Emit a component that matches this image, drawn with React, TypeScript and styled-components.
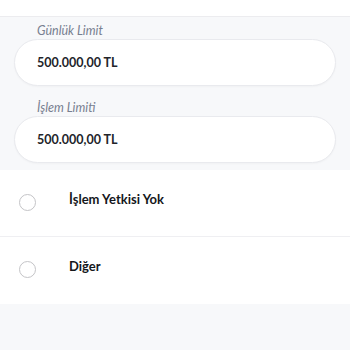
import React from 'react';
import styled, { createGlobalStyle } from 'styled-components';

const GlobalStyle = createGlobalStyle`
  html, body {
    margin: 0;
    padding: 0;
    background: #f7f8fa;
    font-family: Lato, "Noto Sans", sans-serif;
  }
`

const Page = styled.div`
  width: 350px;
  min-height: 350px;
  display: flex;
  flex-direction: column;
`

const TopBar = styled.div`
  height: 16px;
  background: #fff;
  border-bottom: 1px solid #ececef;
`

const LimitPanel = styled.div`
  background: #f7f8fa;
  padding: 6px 14px 7px;
  display: flex;
  flex-direction: column;
`

const Field = styled.div`
  display: flex;
  flex-direction: column;
  & + & {
    margin-top: 14px;
  }
`

const Label = styled.span`
  font-style: italic;
  font-size: 12.5px;
  line-height: 16px;
  color: #787f90;
  padding-left: 23px;
`

const Input = styled.div`
  height: 45px;
  border: 1px solid #e9eaee;
  border-radius: 24px;
  background: #fff;
  display: flex;
  align-items: center;
  padding-left: 22px;
  font-size: 12.5px;
  font-weight: 700;
  color: #22242a;
  box-shadow: 0 1px 2px rgba(0, 0, 0, 0.03);
`

const OptionList = styled.div`
  background: #fff;
`

const OptionRow = styled.div<{ $divider?: boolean }>`
  height: 67px;
  box-sizing: border-box;
  display: flex;
  align-items: flex-start;
  padding: 20px 0 0 19px;
  border-bottom: ${p => (p.$divider ? '1px solid #efeff2' : 'none')};
`

const Radio = styled.span`
  width: 17px;
  height: 17px;
  box-sizing: border-box;
  border: 1.6px solid #c4c4c7;
  border-radius: 50%;
  margin-top: 4px;
  flex-shrink: 0;
`

const OptionText = styled.span`
  margin-left: 33px;
  font-size: 13px;
  font-weight: 700;
  line-height: 18px;
  color: #15171b;
`

const Footer = styled.div`
  flex: 1;
  background: #f7f8fa;
`

const limits = [
  { label: 'Günlük Limit', value: '500.000,00 TL' },
  { label: 'İşlem Limiti', value: '500.000,00 TL' },
]

const options = ['İşlem Yetkisi Yok', 'Diğer']

export default function App() {
  return (
    <Page>
      <GlobalStyle />
      <TopBar />
      <LimitPanel>
        {limits.map(l => (
          <Field key={l.label}>
            <Label>{l.label}</Label>
            <Input>{l.value}</Input>
          </Field>
        ))}
      </LimitPanel>
      <OptionList>
        {options.map((o, i) => (
          <OptionRow key={o} $divider={i < options.length - 1}>
            <Radio />
            <OptionText>{o}</OptionText>
          </OptionRow>
        ))}
      </OptionList>
      <Footer />
    </Page>
  )
}
